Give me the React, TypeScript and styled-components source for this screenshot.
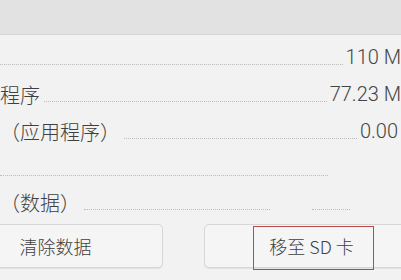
import React from "react";
import styled, { createGlobalStyle } from "styled-components";

const GlobalStyle = createGlobalStyle`
  html, body {
    margin: 0;
    padding: 0;
    background: #f2f2f2;
    overflow: hidden;
  }
  body {
    width: 401px;
    height: 280px;
  }
`;

const Screen = styled.div`
  width: 401px;
  height: 280px;
  overflow: hidden;
  background: #f2f2f2;
  display: flex;
  flex-direction: column;
`;

const TopBar = styled.div`
  height: 34px;
  flex: none;
  background: #e2e2e2;
  border-bottom: 1px solid #d6d6d6;
`;

const List = styled.div`
  margin-top: 4px;
  display: flex;
  flex-direction: column;
`;

const Row = styled.div<{ $h?: number }>`
  height: ${(p) => p.$h ?? 37}px;
  display: flex;
  align-items: flex-start;
`;

const Label = styled.span`
  flex: none;
  font-family: "Noto Sans CJK SC", sans-serif;
  font-weight: 300;
  font-size: 20px;
  line-height: 37px;
  color: #3f3f3f;
  margin-right: 4px;
`;

const Leader = styled.span<{ $w?: number }>`
  ${(p) => (p.$w ? `width: ${p.$w}px; flex: none;` : "flex: 1;")}
  height: 26px;
  border-bottom: 1px dotted #bcbcbc;
  box-sizing: border-box;
`;

const Gap = styled.span<{ $w: number }>`
  flex: none;
  width: ${(p) => p.$w}px;
`;

const Value = styled.span<{ $w?: number; $end?: number }>`
  flex: none;
  ${(p) => (p.$w ? `width: ${p.$w}px;` : "")}
  margin-left: 3px;
  margin-right: ${(p) => p.$end ?? 0}px;
  font-family: Roboto, "Liberation Sans", sans-serif;
  font-weight: 300;
  font-size: 20px;
  line-height: 37px;
  color: #454545;
  text-align: right;
`;

const ButtonRow = styled.div`
  margin: 3px 0 0 -52px;
  display: flex;
  gap: 41px;
`;

const ButtonWrap = styled.div`
  position: relative;
  flex: none;
`;

const Button = styled.button`
  width: 215px;
  height: 44px;
  box-sizing: border-box;
  border: 1px solid #d7d7d7;
  border-radius: 5px;
  background: #f5f5f5;
  box-shadow: 0 1px 0 #e2e2e2;
  font-family: "Noto Sans CJK SC", sans-serif;
  font-weight: 300;
  font-size: 18px;
  color: #404040;
  padding: 0;
  display: flex;
  align-items: center;
  justify-content: center;
`;

const Highlight = styled.div`
  position: absolute;
  left: 49px;
  top: 2px;
  width: 121px;
  height: 44px;
  box-sizing: border-box;
  border: 1.5px solid #b84a4c;
  pointer-events: none;
`;

export default function App() {
  return (
    <>
      <GlobalStyle />
      <Screen>
        <TopBar />
        <List>
          <Row>
            <Leader />
            <Value>110 M</Value>
          </Row>
          <Row>
            <Label>程序</Label>
            <Leader />
            <Value>77.23 M</Value>
          </Row>
          <Row>
            <Label>（应用程序）</Label>
            <Leader />
            <Value $end={3}>0.00</Value>
          </Row>
          <Row $h={34}>
            <Leader />
            <Value $w={70} />
          </Row>
          <Row>
            <Label>（数据）</Label>
            <Leader />
            <Gap $w={42} />
            <Leader $w={38} />
            <Value $w={48} />
          </Row>
        </List>
        <ButtonRow>
          <ButtonWrap>
            <Button>清除数据</Button>
          </ButtonWrap>
          <ButtonWrap>
            <Button>移至 SD 卡</Button>
            <Highlight />
          </ButtonWrap>
        </ButtonRow>
      </Screen>
    </>
  );
}
